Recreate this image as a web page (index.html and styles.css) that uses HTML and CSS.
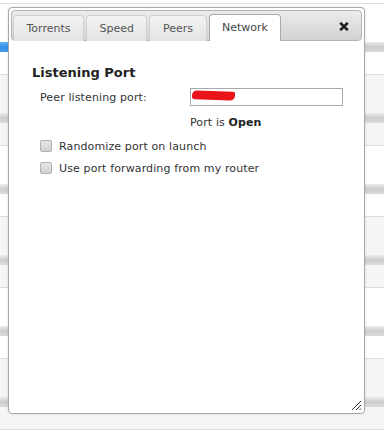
FILE: index.html
```html
<!DOCTYPE html>
<html>
<head>
<meta charset="utf-8">
<link rel="stylesheet" href="styles.css">
</head>
<body>
<div class="list">
  <div class="row"><div class="bar"><div class="fill" style="width:40%"></div></div></div>
  <div class="row alt"><div class="bar"></div></div>
  <div class="row"><div class="bar"></div></div>
  <div class="row alt"><div class="bar"></div></div>
  <div class="row"><div class="bar"></div></div>
  <div class="row alt"><div class="bar"></div></div>
</div>

<div class="dialog">
  <div class="header">
    <div class="tab">Torrents</div>
    <div class="tab">Speed</div>
    <div class="tab">Peers</div>
    <div class="tab active">Network</div>
    <div class="close">
      <svg width="10" height="9" viewBox="0 0 10 9"><path d="M1.2 0.8 L8.8 8.2 M8.8 0.8 L1.2 8.2" stroke="#1e1e1e" stroke-width="2.6" stroke-linecap="butt"/></svg>
    </div>
  </div>
  <div class="content">
    <h3 class="heading">Listening Port</h3>
    <div class="form">
      <div class="label">Peer listening port:</div>
      <div class="input"><span class="scribble"></span></div>
      <div></div>
      <div class="status">Port is <b>Open</b></div>
    </div>
    <label class="check first"><span class="box"></span>Randomize port on launch</label>
    <label class="check"><span class="box"></span>Use port forwarding from my router</label>
  </div>
  <svg class="grip" width="12" height="12" viewBox="0 0 12 12"><path d="M11 2 L2 11 M11 6 L6 11 M11 9.5 L9.5 11" stroke="#333" stroke-width="1"/></svg>
</div>
</body>
</html>
```

FILE: styles.css
```css
html, body {
  margin: 0;
  padding: 0;
  background: #fff;
  font-family: "DejaVu Sans", Verdana, sans-serif;
  font-size: 11px;
  color: #333;
}
.list {
  margin-top: 3px;
  border-top: 1px solid #ddd;
}
.row {
  border-bottom: 1px solid #ddd;
  background: #fff;
  display: flex;
  flex-direction: column;
  padding-top: 38px;
  height: 32px;
}
.row.alt { background: #f5f5f5; }
.bar {
  height: 10px;
  background: linear-gradient(#ececec, #cdcdcd 50%, #dcdcdc);
}
.fill {
  height: 10px;
  background: linear-gradient(#63b1f5, #2f8fea 50%, #4aa0ee);
}
.dialog {
  position: absolute;
  left: 8px;
  top: 7px;
  width: 351px;
  height: 401px;
  border: 1px solid #a8a8a8;
  border-radius: 4px;
  background: #fff;
  box-shadow: 0 0 3px rgba(0,0,0,0.12);
  padding: 2px;
}
.header {
  height: 29px;
  border: 1px solid #b4b4b4;
  border-radius: 4px;
  background: linear-gradient(#ececec, #d2d2d2);
  display: flex;
  align-items: flex-end;
  padding: 0 2px 0 1px;
}
.tab {
  height: 25px;
  line-height: 25px;
  padding: 0 12.5px;
  margin-right: 2px;
  border: 1px solid #d0d0d0;
  border-bottom: none;
  border-radius: 4px 4px 0 0;
  background: linear-gradient(#f3f3f3, #e3e3e3);
  color: #555;
  margin-bottom: -1px;
}
.tab.active {
  background: #fff;
  border-color: #aaa;
  color: #444;
  height: 26px;
}
.close {
  margin-left: auto;
  align-self: center;
  margin-right: 10px;
  margin-top: 2px;
  display: flex;
}
.content {
  padding: 24px 0 0 21px;
  letter-spacing: 0.12px;
}
.heading {
  margin: 0 0 7px 0;
  font-size: 13px;
  font-weight: bold;
  color: #222;
  line-height: 16px;
  letter-spacing: 0;
}
.form {
  display: grid;
  grid-template-columns: 150px 153px;
  row-gap: 9px;
  padding-left: 8px;
  align-items: center;
}
.label { color: #333; }
.input {
  height: 16px;
  border: 1px solid #a9a9a9;
  position: relative;
}
.scribble {
  position: absolute;
  left: 1px;
  top: 2px;
  width: 43px;
  height: 9px;
  background: #e8141a;
  border-radius: 5px 2px 5px 3px;
  transform: rotate(2deg);
}
.status { line-height: 16px; }
.status b { color: #222; }
.check {
  display: flex;
  align-items: center;
  padding-left: 8px;
  height: 17px;
  margin-top: 5px;
}
.check.first { margin-top: 7px; }
.box {
  width: 10px;
  height: 10px;
  border: 1px solid #b0b0b0;
  border-radius: 2px;
  background: linear-gradient(#e6e6e6, #d0d0d0);
  margin-right: 7px;
  margin-top: -2px;
}
.grip {
  position: absolute;
  right: 2px;
  bottom: 2px;
}
```
